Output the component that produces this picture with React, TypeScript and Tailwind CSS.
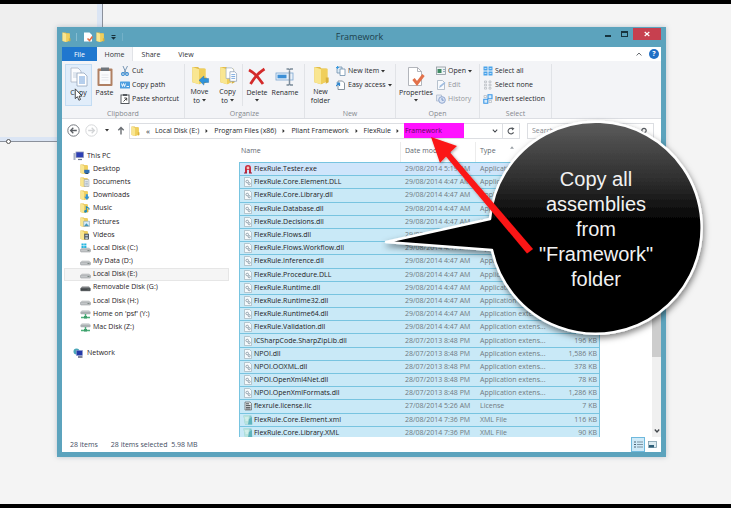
import type { ReactNode } from "react";

type FileKind = "exe" | "dll" | "lic" | "xml";

const files: { name: string; date: string; type: string; size?: string; kind: FileKind }[] = [
  { name: "FlexRule.Tester.exe", date: "29/08/2014 5:19 AM", type: "Application", kind: "exe" },
  { name: "FlexRule.Core.Element.DLL", date: "29/08/2014 4:47 AM", type: "Application extens...", kind: "dll" },
  { name: "FlexRule.Core.Library.dll", date: "29/08/2014 4:47 AM", type: "Application extens...", kind: "dll" },
  { name: "FlexRule.Database.dll", date: "29/08/2014 4:47 AM", type: "Application extens...", kind: "dll" },
  { name: "FlexRule.Decisions.dll", date: "29/08/2014 4:47 AM", type: "Application extens...", kind: "dll" },
  { name: "FlexRule.Flows.dll", date: "29/08/2014 4:47 AM", type: "Application extens...", kind: "dll" },
  { name: "FlexRule.Flows.Workflow.dll", date: "29/08/2014 4:47 AM", type: "Application extens...", kind: "dll" },
  { name: "FlexRule.Inference.dll", date: "29/08/2014 4:47 AM", type: "Application extens...", kind: "dll" },
  { name: "FlexRule.Procedure.DLL", date: "29/08/2014 4:47 AM", type: "Application extens...", kind: "dll" },
  { name: "FlexRule.Runtime.dll", date: "29/08/2014 4:47 AM", type: "Application extens...", kind: "dll" },
  { name: "FlexRule.Runtime32.dll", date: "29/08/2014 4:47 AM", type: "Application extens...", kind: "dll" },
  { name: "FlexRule.Runtime64.dll", date: "29/08/2014 4:47 AM", type: "Application extens...", kind: "dll" },
  { name: "FlexRule.Validation.dll", date: "29/08/2014 4:47 AM", type: "Application extens...", kind: "dll" },
  { name: "ICSharpCode.SharpZipLib.dll", date: "28/07/2013 8:48 PM", type: "Application extens...", size: "196 KB", kind: "dll" },
  { name: "NPOI.dll", date: "28/07/2013 8:48 PM", type: "Application extens...", size: "1,586 KB", kind: "dll" },
  { name: "NPOI.OOXML.dll", date: "28/07/2013 8:48 PM", type: "Application extens...", size: "378 KB", kind: "dll" },
  { name: "NPOI.OpenXml4Net.dll", date: "28/07/2013 8:48 PM", type: "Application extens...", size: "78 KB", kind: "dll" },
  { name: "NPOI.OpenXmlFormats.dll", date: "28/07/2013 8:48 PM", type: "Application extens...", size: "1,286 KB", kind: "dll" },
  { name: "flexrule.license.lic", date: "27/08/2014 5:26 AM", type: "License", size: "7 KB", kind: "lic" },
  { name: "FlexRule.Core.Element.xml", date: "28/08/2014 7:36 PM", type: "XML File", size: "116 KB", kind: "xml" },
  { name: "FlexRule.Core.Library.XML", date: "28/08/2014 7:36 PM", type: "XML File", size: "90 KB", kind: "xml" },
];

function FolderShape() {
  return (
    <>
      <path d="M2 1h6l1.500 1.500H15V16l-6 3-7-2z" fill="#e3bd4a" />
      <path d="M9 3h7v13l-7 3z" fill="#f0cf5c" />
      <path d="M2 1l7 2.500V19l-7-2z" fill="#f9e691" />
      <path d="M14 12h3v5l-3 1.500z" fill="#d9b13c" />
    </>
  );
}

function MiniFolder({ children }: { children?: ReactNode }) {
  return (
    <svg viewBox="1 0 19 19" className="h-[10px] w-[10px] shrink-0" aria-hidden="true">
      <FolderShape />
      {children}
    </svg>
  );
}

function BigIcon({ children, wide = false }: { children: ReactNode; wide?: boolean }) {
  return (
    <svg viewBox={wide ? "0 0 20 22" : "0 0 18 22"} className={wide ? "h-[22px] w-[20px]" : "h-[22px] w-[18px]"} aria-hidden="true">
      {children}
    </svg>
  );
}

function SmallIcon({ children }: { children: ReactNode }) {
  return (
    <svg viewBox="0 0 10 10" className="h-[10px] w-[10px] shrink-0" aria-hidden="true">
      {children}
    </svg>
  );
}

function FileIcon({ kind }: { kind: FileKind }) {
  if (kind === "exe")
    return (
      <SmallIcon>
        <path d="M2 9V4a3 3 0 0 1 6 0v5H6V6H4v3z" fill="#c9283c" />
        <circle cx="5" cy="4" r="1.400" fill="#f3c3b8" />
        <path d="M1 9h3M6 9h3" stroke="#8d2440" strokeWidth="1.200" />
      </SmallIcon>
    );
  if (kind === "lic")
    return (
      <SmallIcon>
        <path d="M2 1h5l1.500 1.500V9H2z" fill="#e3e8ea" stroke="#5b6166" strokeWidth=".7" />
        <path d="M3 2.800h3M3 4.600h4.500M3 6.400h4.500M3 8h4.500" stroke="#3d4348" strokeWidth=".9" />
      </SmallIcon>
    );
  if (kind === "xml")
    return (
      <SmallIcon>
        <path d="M.5.5h8l1 9H2z" fill="#86c9cc" />
        <path d="M.5.500h6v8.500H2z" fill="#b9e3dc" />
        <path d="M6 4l3-2v7.500H5z" fill="#5fb3bd" />
        <path d="M2 3h3.500M2.500 5H5" stroke="#f5ffff" strokeWidth=".8" />
      </SmallIcon>
    );
  return (
    <SmallIcon>
      <path d="M1.500.5h5l2 2v7h-7z" fill="#f6fafc" stroke="#a4b3bc" strokeWidth=".7" />
      <circle cx="4.200" cy="4.500" r="1.300" fill="none" stroke="#8797a3" strokeWidth=".8" />
      <circle cx="6.200" cy="6.700" r="1.100" fill="none" stroke="#8797a3" strokeWidth=".8" />
    </SmallIcon>
  );
}

function Drive({ color = "#c3c6c8", children }: { color?: string; children?: ReactNode }) {
  return (
    <svg viewBox="0 0 11 10" className="h-[10px] w-[11px] shrink-0" aria-hidden="true">
      <path d="M2 4.500h7l1.500 2H.5z" fill={color} opacity=".7" />
      <rect x=".5" y="6" width="10" height="3" rx=".8" fill={color} stroke="#888d90" strokeWidth=".5" />
      <path d="M7.500 7.500h2" stroke="#5d6b64" strokeWidth=".7" />
      {children}
    </svg>
  );
}

function NetDrive() {
  return (
    <svg viewBox="0 0 11 10" className="h-[10px] w-[11px] shrink-0" aria-hidden="true">
      <path d="M2 1h7l1.500 2H.5z" fill="#d9dcdd" />
      <rect x=".5" y="2.500" width="10" height="2.700" rx=".8" fill="#aab0b2" />
      <path d="M5.500 5v3M1 8.500h9" stroke="#4bb07a" strokeWidth="1.500" />
      <rect x="4" y="7" width="3" height="2.500" fill="#3f9c6c" />
    </svg>
  );
}

const places: { label: string; icon: ReactNode; active?: boolean }[] = [
  { label: "Desktop", icon: <MiniFolder><path d="M9 11h10v6H9z" fill="#2f6fb3" /><path d="M11 18h6" stroke="#244b73" strokeWidth="2" /></MiniFolder> },
  { label: "Documents", icon: <MiniFolder><path d="M9 5h9v13H9z" fill="#e9eef2" stroke="#8b98a3" /><path d="M11 9h5M11 12h5M11 15h5" stroke="#7089a3" /></MiniFolder> },
  { label: "Downloads", icon: <MiniFolder><path d="M12 8h4v5h3l-5 6-5-6h3z" fill="#2f93d8" /></MiniFolder> },
  { label: "Music", icon: <MiniFolder><path d="M13 17V7l5 3v3" stroke="#1f8ab8" strokeWidth="2" fill="none" /><circle cx="11.500" cy="16" r="2.500" fill="#1f8ab8" /></MiniFolder> },
  { label: "Pictures", icon: <MiniFolder><path d="M8 8h11v10H8z" fill="#d9ecf6" stroke="#7898a8" /><path d="M9 17l4-5 5 5z" fill="#4596b9" /></MiniFolder> },
  { label: "Videos", icon: <MiniFolder><path d="M9 7h9v11H9z" fill="#4d5664" /><path d="M11 9h5v3h-5zM11 14h5v3h-5z" fill="#b8c8d4" /></MiniFolder> },
  { label: "Local Disk (C:)", icon: <Drive><path d="M1.500.5h2.200v2H1.500zM4.200.5h2.200v2H4.200zM1.500 3h2.200v2H1.500zM4.200 3h2.200v2H4.200z" fill="#25b5df" /></Drive> },
  { label: "My Data (D:)", icon: <Drive /> },
  { label: "Local Disk (E:)", icon: <Drive />, active: true },
  { label: "Removable Disk (G:)", icon: <Drive color="#45494c" /> },
  { label: "Local Disk (H:)", icon: <Drive /> },
  { label: "Home on 'psf' (Y:)", icon: <NetDrive /> },
  { label: "Mac Disk (Z:)", icon: <NetDrive /> },
];

function Caret() {
  return (
    <svg viewBox="0 0 4 3" className="h-[3px] w-[4px] shrink-0" aria-hidden="true">
      <path d="M0 0h4L2 2.600z" fill="#333" />
    </svg>
  );
}

function BigButton({ icon, lines, caret, width, active }: { icon: ReactNode; lines: string[]; caret?: boolean; width: string; active?: boolean }) {
  return (
    <button
      type="button"
      className={`${width} flex h-[42px] shrink-0 flex-col items-center border pt-[1px] leading-[9px] ${active ? "border-[#c3dcf3] bg-[#e1edfa]" : "border-transparent"}`}
    >
      {icon}
      {lines.map((line, i) => (
        <span key={line} className="flex items-center gap-[2px] whitespace-nowrap">
          {line}
          {caret && i > 0 && <Caret />}
        </span>
      ))}
      {caret && lines.length === 1 && <span className="flex h-[7px] items-center"><Caret /></span>}
    </button>
  );
}

function SmallButton({ icon, label, caret, muted }: { icon: ReactNode; label: string; caret?: boolean; muted?: boolean }) {
  return (
    <button type="button" className={`flex h-[14px] items-center gap-[2px] whitespace-nowrap ${muted ? "text-[#94979d]" : ""}`}>
      {icon}
      <span>{label}</span>
      {caret && <Caret />}
    </button>
  );
}

function Group({ label, width, children }: { label: string; width: string; children: ReactNode }) {
  return (
    <section aria-label={label} className={`${width} flex shrink-0 flex-col border-r border-[#e1e3e7]`}>
      <div className="flex h-[45px] items-start">{children}</div>
      <h2 className="text-center leading-[9px] text-[#85888e]">{label}</h2>
    </section>
  );
}

function Ribbon() {
  return (
    <div className="flex h-[58px] border-b border-[#dcdee3] bg-[#f3f4f7] pt-[3px] text-[#26282c]">
      <Group label="Clipboard" width="w-[123px]">
        <div className="ml-[3px] flex">
          <BigButton
            width="w-[27px]"
            active
            lines={["Copy"]}
            icon={
              <BigIcon>
                <path d="M1 2h7l3 3v11H1z" fill="#fbfcfe" stroke="#a9b4c4" strokeWidth=".8" />
                <path d="M3 7h4M3 9h4M3 11h4" stroke="#b9c6d8" strokeWidth=".8" />
                <path d="M7 7h7l3 3v10H7z" fill="#fff" stroke="#93a5bd" strokeWidth=".8" />
                <path d="M9 11h6M9 13h6M9 15h6M9 17h6" stroke="#5b93d6" strokeWidth=".9" />
              </BigIcon>
            }
          />
          <BigButton
            width="w-[25px]"
            lines={["Paste"]}
            icon={
              <BigIcon>
                <rect x="1.500" y="2.500" width="15" height="17.500" rx="1" fill="#b08063" />
                <path d="M3.500 5h11v13h-11z" fill="#fafbfc" />
                <path d="M5 1.500h8V5H5z" fill="#6f757b" />
                <path d="M5.500 9h7M5.500 11.500h7M5.500 14h7" stroke="#dfe3e8" strokeWidth=".8" />
              </BigIcon>
            }
          />
        </div>
        <div className="ml-[3px] flex flex-col">
          <SmallButton
            label="Cut"
            icon={
              <SmallIcon>
                <path d="M3 0l3 7M7.500 0l-3.500 7" stroke="#7796b5" strokeWidth="1" />
                <circle cx="3" cy="8" r="1.400" fill="none" stroke="#2f86cf" strokeWidth="1.100" />
                <circle cx="7" cy="8" r="1.400" fill="none" stroke="#2f86cf" strokeWidth="1.100" />
              </SmallIcon>
            }
          />
          <SmallButton
            label="Copy path"
            icon={
              <SmallIcon>
                <rect x="0" y="1.500" width="10" height="7" rx=".6" fill="#4f9fe0" />
                <path d="M1.500 3.500l1 3 1-3 1 3 1-3M6.500 6.500h2.500" stroke="#fff" strokeWidth=".9" fill="none" />
              </SmallIcon>
            }
          />
          <SmallButton
            label="Paste shortcut"
            icon={
              <SmallIcon>
                <rect x="1" y="1" width="8" height="8.500" fill="#fff" stroke="#55595e" strokeWidth="1" />
                <path d="M3 0h4v2H3z" fill="#55595e" />
                <path d="M3.500 7.500l3-3M4.200 4h2.500v2.500" stroke="#333" strokeWidth=".9" fill="none" />
              </SmallIcon>
            }
          />
        </div>
      </Group>
      <Group label="Organize" width="w-[120px]">
        <BigButton
          width="w-[29px]"
          lines={["Move", "to"]}
          caret
          icon={
            <BigIcon wide>
              <FolderShape />
              <path d="M9 15l5-4.500v2.700h5v4h-5V20z" fill="#2f94dc" stroke="#1f6fb5" strokeWidth=".5" />
            </BigIcon>
          }
        />
        <BigButton
          width="w-[27px]"
          lines={["Copy", "to"]}
          caret
          icon={
            <BigIcon wide>
              <FolderShape />
              <path d="M8 2h6l2 2v9H8z" fill="#fff" stroke="#98a8bb" strokeWidth=".7" />
              <path d="M12 6h5l2 2v8h-7z" fill="#fff" stroke="#7f95b0" strokeWidth=".7" />
              <path d="M13.500 9h4M13.500 11h4M13.500 13h4" stroke="#5b93d6" strokeWidth=".8" />
            </BigIcon>
          }
        />
        <div className="ml-[1px] h-[42px] border-l border-[#e1e3e7]" />
        <BigButton
          width="w-[28px]"
          lines={["Delete"]}
          caret
          icon={
            <BigIcon>
              <path d="M1 4c6 3 10 8 14 14M16.500 3C10 7 6 12 2.500 18" stroke="#d42a2a" strokeWidth="2.800" fill="none" />
            </BigIcon>
          }
        />
        <BigButton
          width="w-[28px]"
          lines={["Rename"]}
          icon={
            <BigIcon wide>
              <rect x="1" y="7" width="17" height="7" fill="#e8f1fa" stroke="#7aa6cf" strokeWidth=".8" />
              <rect x="2.500" y="8.700" width="9" height="3.600" fill="#3c8fd6" />
              <path d="M14.500 3.500v15M11.500 3h2l1 1 1-1h2.500M11.500 19h2l1-1 1 1h2.500" stroke="#7c8c9b" strokeWidth="1.500" fill="none" />
            </BigIcon>
          }
        />
      </Group>
      <Group label="New" width="w-[91px]">
        <BigButton width="w-[31px]" lines={["New", "folder"]} icon={<BigIcon><FolderShape /></BigIcon>} />
        <div className="flex flex-col">
          <SmallButton
            label="New item"
            caret
            icon={
              <SmallIcon>
                <path d="M1 1h5v6H1z" fill="#dcebf7" stroke="#6f8fac" strokeWidth=".8" />
                <path d="M4 3h5v6.500H4z" fill="#fff" stroke="#6f8fac" strokeWidth=".8" />
                <path d="M0 1.500h3M1.500 0v3" stroke="#3c9be0" strokeWidth="1" />
              </SmallIcon>
            }
          />
          <SmallButton
            label="Easy access"
            caret
            icon={
              <SmallIcon>
                <path d="M2 1h4.500l2 2v6.500H2z" fill="#fff" stroke="#7b8894" strokeWidth=".9" />
                <path d="M0 6l3-3M.5 3h3v3" stroke="#2f86cf" strokeWidth="1.200" fill="none" />
              </SmallIcon>
            }
          />
        </div>
      </Group>
      <Group label="Open" width="w-[84px]">
        <BigButton
          width="w-[40px]"
          lines={["Properties"]}
          caret
          icon={
            <BigIcon>
              <path d="M1.500 1.500h9l4 4v14h-13z" fill="#fff" stroke="#a9adb3" strokeWidth=".9" />
              <path d="M10.500 1.500v4h4" fill="none" stroke="#a9adb3" strokeWidth=".9" />
              <path d="M6.500 13l3.500 4.500L16.500 9" stroke="#e2714a" strokeWidth="3" fill="none" />
            </BigIcon>
          }
        />
        <div className="flex flex-col">
          <SmallButton
            label="Open"
            caret
            icon={
              <SmallIcon>
                <rect x=".5" y="1" width="9" height="7.500" fill="#eef3f5" stroke="#8e979e" strokeWidth=".8" />
                <rect x="1.500" y="3" width="4" height="4" fill="#3f8a62" />
                <path d="M7 3.500h2M7 5.500h2" stroke="#7d9db3" strokeWidth=".8" />
              </SmallIcon>
            }
          />
          <SmallButton
            label="Edit"
            muted
            icon={
              <SmallIcon>
                <path d="M1.500.5h5l2 2v7h-7z" fill="#f8fafd" stroke="#a6b2c2" strokeWidth=".8" />
                <path d="M3 8l1-2.500L8.500 2 9.500 3 5 7z" fill="#9ebce0" />
              </SmallIcon>
            }
          />
          <SmallButton
            label="History"
            muted
            icon={
              <SmallIcon>
                <path d="M.5 1h5v6h-5z" fill="#e3e9f3" stroke="#a6b4cb" strokeWidth=".7" />
                <circle cx="6" cy="6" r="3.300" fill="#dbe5f5" stroke="#8fa6cf" strokeWidth="1" />
                <path d="M6 4v2.200h1.800" stroke="#6e8cc4" strokeWidth=".9" fill="none" />
              </SmallIcon>
            }
          />
        </div>
      </Group>
      <Group label="Select" width="w-[72px]">
        <div className="ml-[3px] flex flex-col">
          <SmallButton
            label="Select all"
            icon={
              <SmallIcon>
                <path d="M.5.5h4v4h-4zM5.500.5h4v4h-4zM.5 5.500h4v4h-4zM5.500 5.500h4v4h-4z" fill="#4aa3ea" />
                <path d="M1.500 2.500h2M6.500 2.500h2M1.500 7.500h2M6.500 7.500h2" stroke="#d6ebfb" strokeWidth=".8" />
              </SmallIcon>
            }
          />
          <SmallButton
            label="Select none"
            icon={
              <SmallIcon>
                <path d="M1.500 1h2v1.700h-2zM6 1h2v1.700H6zM1.500 4.200h2v1.700h-2zM6 4.200h2v1.700H6zM1.500 7.400h2v1.700h-2zM6 7.400h2v1.700H6z" fill="none" stroke="#a9aeb6" strokeWidth=".6" />
              </SmallIcon>
            }
          />
          <SmallButton
            label="Invert selection"
            icon={
              <SmallIcon>
                <path d="M5 .8h4v4H5zM.8 5.200h4v4h-4z" fill="#d7ecfd" stroke="#3a97e6" strokeWidth="1.100" />
                <path d="M1 1.500h2.500v2H1zM6 6.500h2.500v2H6z" fill="none" stroke="#a9aeb6" strokeWidth=".6" />
              </SmallIcon>
            }
          />
        </div>
      </Group>
    </div>
  );
}

function TitleBar() {
  return (
    <header className="flex h-[20px] items-start">
      <div className="flex h-[20px] flex-1 items-center">
        <MiniFolder />
        <span className="ml-[4px] h-[8px] border-l border-[#86bdd2]" />
        <button type="button" aria-label="Properties" className="ml-[6px]">
          <svg viewBox="0 0 10 10" className="h-[10px] w-[10px]" aria-hidden="true">
            <path d="M1 .5h5.500L9 3v6.500H1z" fill="#fff" />
            <path d="M4.500 6.500l2 2 3-4" stroke="#e2714a" strokeWidth="1.600" fill="none" />
          </svg>
        </button>
        <button type="button" aria-label="New folder" className="ml-[3px]">
          <MiniFolder />
        </button>
        <button type="button" aria-label="Customize toolbar" className="ml-[5px]">
          <svg viewBox="0 0 5 5" className="h-[5px] w-[5px]" aria-hidden="true">
            <path d="M.5.5h4" stroke="#16323d" />
            <path d="M0 2h5L2.500 4.700z" fill="#16323d" />
          </svg>
        </button>
        <span className="ml-[6px] h-[8px] border-l border-[#74b1c8]" />
      </div>
      <h1 className="pr-[4px] text-[9px] leading-[20px] text-[#1d3f4c]">Framework</h1>
      <div className="flex flex-1 items-start justify-end pt-[1px]">
        <button type="button" aria-label="Minimize" className="flex h-[12px] w-[16px] items-center justify-center">
          <span className="mt-[4px] h-[2px] w-[6px] bg-[#17343f]" />
        </button>
        <button type="button" aria-label="Maximize" className="flex h-[12px] w-[17px] items-center justify-center">
          <span className="h-[6px] w-[7px] border border-t-2 border-[#17343f]" />
        </button>
        <button type="button" aria-label="Close" className="flex h-[12px] w-[28px] items-center justify-center bg-[#c7404f]">
          <svg viewBox="0 0 6 6" className="h-[6px] w-[6px]" aria-hidden="true">
            <path d="M.7 1l4.600 4M5.300 1L.7 5" stroke="#fff" strokeWidth="1.200" />
          </svg>
        </button>
      </div>
    </header>
  );
}

function Tabs() {
  return (
    <div className="flex h-[14px] items-stretch leading-[12px] text-[#2e3136]">
      <button type="button" className="w-[35px] bg-[#1f77cf] pt-[1px] text-white">File</button>
      <button type="button" className="w-[36px] border-r border-[#e1e3e7] bg-[#f3f4f7] pt-[1px]">Home</button>
      <button type="button" className="w-[36px] pt-[1px]">Share</button>
      <button type="button" className="w-[34px] pt-[1px]">View</button>
      <div className="ml-auto flex items-center gap-[7px] pr-[2px]">
        <button type="button" aria-label="Collapse ribbon">
          <svg viewBox="0 0 6 4" className="h-[4px] w-[6px]" aria-hidden="true">
            <path d="M.6 3.500L3 1l2.400 2.500" stroke="#666b70" fill="none" />
          </svg>
        </button>
        <button type="button" aria-label="Help" className="flex h-[10px] w-[10px] items-center justify-center rounded-full bg-[#1f6fc6] font-bold text-white">
          ?
        </button>
      </div>
    </div>
  );
}

function CrumbArrow() {
  return (
    <svg viewBox="0 0 3 5" className="h-[4px] w-[3px] shrink-0" aria-hidden="true">
      <path d="M.3 0L3 2.500.3 5z" fill="#333" />
    </svg>
  );
}

function AddressRow() {
  return (
    <div className="flex h-[23px] items-center text-[#26282c]">
      <div className="flex w-[67px] shrink-0 items-center pl-[5px]">
        <button type="button" aria-label="Back">
          <svg viewBox="0 0 13 13" className="h-[13px] w-[13px]" aria-hidden="true">
            <circle cx="6.500" cy="6.500" r="5.700" fill="#fff" stroke="#777b80" strokeWidth="1" />
            <path d="M9.800 6.500H3.800M6.300 3.800L3.600 6.500l2.700 2.700" stroke="#5b5f64" strokeWidth="1.300" fill="none" />
          </svg>
        </button>
        <button type="button" aria-label="Forward" className="ml-[5px]">
          <svg viewBox="0 0 13 13" className="h-[13px] w-[13px]" aria-hidden="true">
            <circle cx="6.500" cy="6.500" r="5.700" fill="#fff" stroke="#d6d8da" strokeWidth="1" />
            <path d="M3.200 6.500h6M6.700 3.800l2.700 2.700-2.700 2.700" stroke="#d2d4d6" strokeWidth="1.300" fill="none" />
          </svg>
        </button>
        <button type="button" aria-label="Recent locations" className="ml-[7px] flex"><Caret /></button>
        <button type="button" aria-label="Up" className="ml-[8px]">
          <svg viewBox="0 0 8 9" className="h-[9px] w-[8px]" aria-hidden="true">
            <path d="M4 8.500V1.500M1.300 4.200L4 1.500l2.700 2.700" stroke="#6a6e73" strokeWidth="1.400" fill="none" />
          </svg>
        </button>
      </div>
      <nav aria-label="Address" className="flex h-[16px] min-w-0 flex-1 items-center border border-[#dcdee2] pl-[1px]">
        <MiniFolder />
        <span className="mx-[5px] text-[8px]">«</span>
        <a href="#e" className="whitespace-nowrap">Local Disk (E:)</a>
        <span className="flex w-[15px] justify-center"><CrumbArrow /></span>
        <a href="#program-files" className="whitespace-nowrap">Program Files (x86)</a>
        <span className="flex w-[15px] justify-center"><CrumbArrow /></span>
        <a href="#pliant" className="whitespace-nowrap">Pliant Framework</a>
        <span className="flex w-[15px] justify-center"><CrumbArrow /></span>
        <a href="#flexrule" className="whitespace-nowrap">FlexRule</a>
        <span className="flex w-[13px] justify-center"><CrumbArrow /></span>
        <a href="#framework" className="flex h-[15px] w-[60px] items-center bg-[#ff12ff] pl-[1px] text-[#5c0a5c]">Framework</a>
        <button type="button" aria-label="Previous locations" className="ml-auto mr-[4px]">
          <svg viewBox="0 0 6 4" className="h-[4px] w-[6px]" aria-hidden="true">
            <path d="M.8.600L3 3 5.200.600" stroke="#44484d" strokeWidth="1.100" fill="none" />
          </svg>
        </button>
        <button type="button" aria-label="Refresh" className="flex h-full w-[17px] items-center justify-center border-l border-[#dcdee2]">
          <svg viewBox="0 0 8 8" className="h-[8px] w-[8px]" aria-hidden="true">
            <path d="M6.500 5.200A2.800 2.800 0 1 1 5.500 1.800" stroke="#55595e" strokeWidth="1.100" fill="none" />
            <path d="M4.500 0l3 1.500-2.300 2z" fill="#55595e" />
          </svg>
        </button>
      </nav>
      <label className="mx-[7px] flex h-[16px] w-[127px] shrink-0 items-center border border-[#dcdee2] pl-[4px] pr-[5px]">
        <span className="sr-only">Search</span>
        <input type="text" placeholder="Search Framework" className="h-[14px] min-w-0 flex-1 bg-transparent leading-[14px] outline-none placeholder:text-[#85888d]" />
        <svg viewBox="0 0 8 8" className="h-[8px] w-[8px]" aria-hidden="true">
          <circle cx="4" cy="3.500" r="2.200" stroke="#55595e" strokeWidth="1.200" fill="none" />
          <path d="M2.500 5.200L1 7" stroke="#55595e" strokeWidth="1.200" />
        </svg>
      </label>
    </div>
  );
}

function Sidebar() {
  return (
    <nav aria-label="Folders" className="w-[177px] shrink-0 pl-[2px] pr-[10px] pt-[7px] text-[#1f2225]">
      <ul className="grid h-[211px] auto-rows-fr">
        <li className="flex items-center">
          <a href="#pc" className="flex items-center gap-[3px] pl-[9px]">
            <svg viewBox="0 0 11 10" className="h-[10px] w-[11px]" aria-hidden="true">
              <rect x="3" y="1" width="7.500" height="5.500" fill="#2d3fb4" stroke="#8f97b8" strokeWidth=".8" />
              <path d="M5 8.500h4" stroke="#6d7690" strokeWidth="1.200" />
              <rect x=".5" y="2" width="2" height="7" fill="#a9b2c4" />
            </svg>
            This PC
          </a>
        </li>
        {places.map((p) => (
          <li key={p.label} className={`flex items-center border ${p.active ? "border-[#e6e6e6] bg-[#f5f5f5]" : "border-transparent"}`}>
            <a href={`#${p.label}`} className="flex items-center pl-[15px]">
              <span className="flex w-[13px]">{p.icon}</span>
              {p.label}
            </a>
          </li>
        ))}
        <li aria-hidden="true" />
        <li className="flex items-center">
          <a href="#network" className="flex items-center gap-[3px] pl-[9px]">
            <svg viewBox="0 0 11 10" className="h-[10px] w-[11px]" aria-hidden="true">
              <circle cx="3.500" cy="3.500" r="3" fill="#4ba6b8" />
              <rect x="3.500" y="2.500" width="6" height="5" fill="#2438a8" stroke="#8d9acb" strokeWidth=".6" />
              <path d="M5 9h4.500" stroke="#3b4568" strokeWidth="1.300" />
            </svg>
            Network
          </a>
        </li>
      </ul>
    </nav>
  );
}

function FileTable() {
  return (
    <table className="h-[297px] w-[361px] shrink-0 table-fixed border-separate border-spacing-0 text-left text-[#707a81]">
      <colgroup>
        <col className="w-[161px]" />
        <col className="w-[75px]" />
        <col className="w-[78px]" />
        <col />
      </colgroup>
      <thead>
        <tr className="h-[20px] text-[#60666f]">
          <th scope="col" className="pb-[2px] pl-[2px] font-normal">Name</th>
          <th scope="col" className="border-l border-[#ececec] pb-[2px] pl-[4px] font-normal">Date modified</th>
          <th scope="col" className="border-l border-[#ececec] pb-[2px] pl-[4px] font-normal">
            <span className="flex items-center">
              Type
              <svg viewBox="0 0 4 3" className="mb-[8px] ml-[14px] h-[3px] w-[4px]" aria-hidden="true">
                <path d="M0 2.800L2 .3l2 2.500z" fill="#9aa0a6" />
              </svg>
            </span>
          </th>
          <th scope="col" aria-label="Size" className="border-l border-[#ececec]" />
        </tr>
      </thead>
      <tbody>
        {files.map((f) => (
          <tr key={f.name} className={f.kind === "exe" ? "bg-[#cfe5fb]" : "bg-[#c9e9f7]"}>
            <td className="border-l border-t border-[#78c4e0] py-0 pl-[3px] pr-0">
              <span className="flex h-[12px] items-center gap-[1px] text-[#1c2022]">
                <FileIcon kind={f.kind} />
                {f.name}
              </span>
            </td>
            <td className="whitespace-nowrap border-t border-[#78c4e0] py-0 pl-[5px]">{f.date}</td>
            <td className="whitespace-nowrap border-t border-[#78c4e0] py-0 pl-[5px]">{f.type}</td>
            <td className="border-r border-t border-[#78c4e0] py-0 pr-[2px] text-right">{f.size}</td>
          </tr>
        ))}
      </tbody>
    </table>
  );
}

function StatusBar() {
  return (
    <footer className="flex h-[15px] items-center pl-[8px] pr-[4px] text-[#434e5f]">
      <span>28 items</span>
      <span className="ml-[13px] whitespace-pre">28 items selected  5.98 MB</span>
      <div className="ml-auto flex h-full items-center gap-[3px]">
        <button type="button" aria-label="Details view" className="flex h-full w-[14px] items-center justify-center border border-[#6fb9dd] bg-[#cfeaf8]">
          <svg viewBox="0 0 9 7" className="h-[7px] w-[9px]" aria-hidden="true">
            <path d="M0 1h2M0 3.500h2M0 6h2" stroke="#4d6575" strokeWidth="1" />
            <path d="M3 1h6M3 3.500h6M3 6h6" stroke="#7d93a2" strokeWidth="1" />
          </svg>
        </button>
        <button type="button" aria-label="Large icons view">
          <svg viewBox="0 0 9 7" className="h-[7px] w-[9px]" aria-hidden="true">
            <rect x=".5" y=".5" width="8" height="6" fill="#dcebf1" stroke="#7c9cab" strokeWidth=".8" />
            <path d="M1 4h5v2.500H1z" fill="#2f5f78" />
          </svg>
        </button>
      </div>
    </footer>
  );
}

function SlideCorner() {
  return (
    <div className="absolute left-0 top-0 h-[138px] w-[103px] border-b border-r border-[#8b919c] bg-[#dbe5f4] pb-[4px] pr-[5px]">
      <div className="h-full bg-[#efefef]" />
      <span className="absolute left-[6px] top-[135px] h-[5px] w-[5px] rounded-full border border-[#555] bg-white" />
    </div>
  );
}

function Annotations() {
  return (
    <>
      <svg viewBox="0 0 350 250" className="absolute left-[381px] top-[106px] h-[250px] w-[350px]" aria-hidden="true">
        <defs>
          <linearGradient id="bubble" x1="0" y1="16" x2="0" y2="228" gradientUnits="userSpaceOnUse">
            <stop offset="0" stopColor="#5c5c5c" />
            <stop offset=".28" stopColor="#2d2d2d" />
            <stop offset=".48" stopColor="#000" />
          </linearGradient>
          <filter id="shade" x="-10%" y="-10%" width="120%" height="125%">
            <feDropShadow dx="1" dy="3" stdDeviation="3" floodColor="#000" floodOpacity=".5" />
          </filter>
        </defs>
        <path
          d="M109 113A106 106 0 1 1 111 144L5 136z"
          fill="url(#bubble)"
          stroke="#fff"
          strokeWidth="2.500"
          strokeLinejoin="round"
          filter="url(#shade)"
        />
      </svg>
      <p className="absolute left-[526px] top-[167px] w-[140px] text-center font-['Liberation_Sans',Arial,sans-serif] text-[20px] leading-[25px] text-[#f2f2f2]">
        Copy all assemblies from "Framework" folder
      </p>
      <svg viewBox="0 0 110 125" className="absolute left-[426px] top-[134px] h-[125px] w-[110px]" aria-hidden="true">
        <defs>
          <filter id="arrowShade" x="-10%" y="-10%" width="120%" height="120%">
            <feDropShadow dx="1" dy="1" stdDeviation="1.500" floodColor="#000" floodOpacity=".35" />
          </filter>
        </defs>
        <path d="M5 3l26 9-7 6.500L107 115l-6 4.500L20 22.500l-6 6.500z" fill="#fb1414" filter="url(#arrowShade)" />
      </svg>
      <svg viewBox="0 0 8 12" className="absolute left-[74px] top-[88px] h-[13px] w-[9px]" aria-hidden="true">
        <path d="M1 .8v9l2-1.800 1.400 3.300 1.500-.7L4.500 7.500h2.700z" fill="#fff" stroke="#333" strokeWidth=".8" />
      </svg>
    </>
  );
}

export default function App() {
  return (
    <div className="relative flex min-h-screen flex-col overflow-hidden border-b-4 border-t-4 border-black bg-[#f4f4f4] font-['Open_Sans','Noto_Sans',sans-serif] text-[7px] leading-[10px]">
      <SlideCorner />
      <main className="relative ml-[57px] mr-[65px] mt-[23px] flex flex-col bg-[#5ca3bd] px-[5px] pb-[5px] shadow-[0_0_5px_rgba(90,110,130,0.35)]">
        <TitleBar />
        <div className="flex flex-col bg-white">
          <Tabs />
          <Ribbon />
          <AddressRow />
          <div className="flex h-[295px] overflow-hidden">
            <Sidebar />
            <FileTable />
            <div className="ml-auto flex w-[9px] flex-col items-center bg-[#f0f0f0]" aria-hidden="true">
              <div className="mt-[9px] h-[206px] w-full bg-[#cdcdcd]" />
              <svg viewBox="0 0 6 4" className="mb-[4px] mt-auto h-[4px] w-[6px]">
                <path d="M.8.500L3 3 5.200.500" stroke="#44484d" strokeWidth="1.300" fill="none" />
              </svg>
            </div>
          </div>
          <StatusBar />
        </div>
      </main>
      <div className="absolute -top-1 left-0">
        <Annotations />
      </div>
    </div>
  );
}
